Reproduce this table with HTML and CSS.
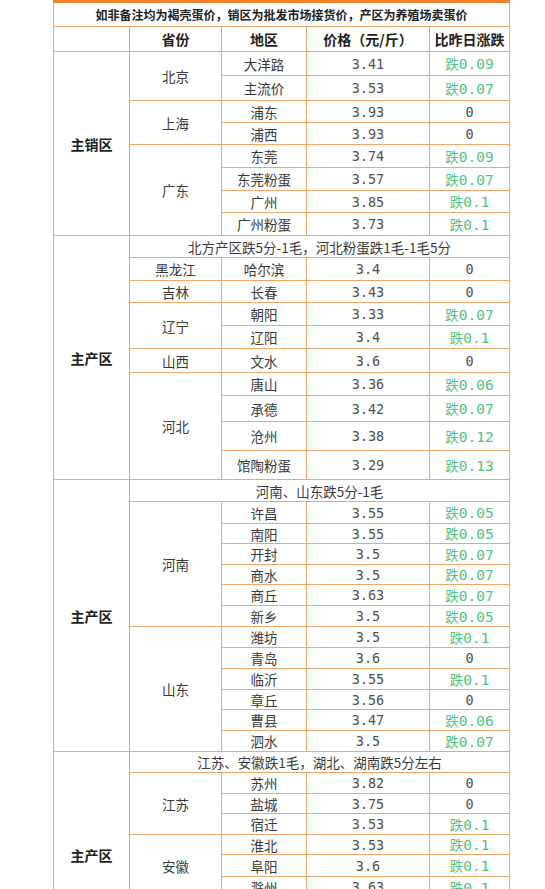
FILE: index.html
```html
<!DOCTYPE html>
<html lang="zh-CN">
<head>
<meta charset="utf-8">
<title>鸡蛋价格</title>
<link rel="stylesheet" href="styles.css">
</head>
<body>
<table class="eggs">
  <colgroup>
    <col class="c1"><col class="c2"><col class="c3"><col class="c4"><col class="c5">
  </colgroup>
  <tr class="h25"><td colspan="5" class="notice">如非备注均为褐壳蛋价，销区为批发市场接货价，产区为养殖场卖蛋价</td></tr>
  <tr class="h25 head"><th></th><th>省份</th><th>地区</th><th>价格（元/斤）</th><th>比昨日涨跌</th></tr>

  <tr class="h24"><td rowspan="8" class="zone">主销区</td><td rowspan="2">北京</td><td>大洋路</td><td class="num">3.41</td><td class="down">跌<span class="num">0.09</span></td></tr>
  <tr class="h25"><td>主流价</td><td class="num">3.53</td><td class="down">跌<span class="num">0.07</span></td></tr>
  <tr class="h22"><td rowspan="2">上海</td><td>浦东</td><td class="num">3.93</td><td class="num">0</td></tr>
  <tr class="h22"><td>浦西</td><td class="num">3.93</td><td class="num">0</td></tr>
  <tr class="h23"><td rowspan="4">广东</td><td>东莞</td><td class="num">3.74</td><td class="down">跌<span class="num">0.09</span></td></tr>
  <tr class="h23"><td>东莞粉蛋</td><td class="num">3.57</td><td class="down">跌<span class="num">0.07</span></td></tr>
  <tr class="h22"><td>广州</td><td class="num">3.85</td><td class="down">跌<span class="num">0.1</span></td></tr>
  <tr class="h23"><td>广州粉蛋</td><td class="num">3.73</td><td class="down">跌<span class="num">0.1</span></td></tr>

  <tr class="h22"><td rowspan="10" class="zone">主产区</td><td colspan="4" class="remark">北方产区跌5分-1毛，河北粉蛋跌1毛-1毛5分</td></tr>
  <tr class="h23"><td>黑龙江</td><td>哈尔滨</td><td class="num">3.4</td><td class="num">0</td></tr>
  <tr class="h22"><td>吉林</td><td>长春</td><td class="num">3.43</td><td class="num">0</td></tr>
  <tr class="h23"><td rowspan="2">辽宁</td><td>朝阳</td><td class="num">3.33</td><td class="down">跌<span class="num">0.07</span></td></tr>
  <tr class="h23"><td>辽阳</td><td class="num">3.4</td><td class="down">跌<span class="num">0.1</span></td></tr>
  <tr class="h24"><td>山西</td><td>文水</td><td class="num">3.6</td><td class="num">0</td></tr>
  <tr class="h23"><td rowspan="4">河北</td><td>唐山</td><td class="num">3.36</td><td class="down">跌<span class="num">0.06</span></td></tr>
  <tr class="h26"><td>承德</td><td class="num">3.42</td><td class="down">跌<span class="num">0.07</span></td></tr>
  <tr class="h29"><td>沧州</td><td class="num">3.38</td><td class="down">跌<span class="num">0.12</span></td></tr>
  <tr class="h29"><td>馆陶粉蛋</td><td class="num">3.29</td><td class="down">跌<span class="num">0.13</span></td></tr>

  <tr class="h22"><td rowspan="13" class="zone">主产区</td><td colspan="4" class="remark">河南、山东跌5分-1毛</td></tr>
  <tr class="h22"><td rowspan="6">河南</td><td>许昌</td><td class="num">3.55</td><td class="down">跌<span class="num">0.05</span></td></tr>
  <tr class="h20"><td>南阳</td><td class="num">3.55</td><td class="down">跌<span class="num">0.05</span></td></tr>
  <tr class="h21"><td>开封</td><td class="num">3.5</td><td class="down">跌<span class="num">0.07</span></td></tr>
  <tr class="h20"><td>商水</td><td class="num">3.5</td><td class="down">跌<span class="num">0.07</span></td></tr>
  <tr class="h21"><td>商丘</td><td class="num">3.63</td><td class="down">跌<span class="num">0.07</span></td></tr>
  <tr class="h21"><td>新乡</td><td class="num">3.5</td><td class="down">跌<span class="num">0.05</span></td></tr>
  <tr class="h21"><td rowspan="6">山东</td><td>潍坊</td><td class="num">3.5</td><td class="down">跌<span class="num">0.1</span></td></tr>
  <tr class="h21"><td>青岛</td><td class="num">3.6</td><td class="num">0</td></tr>
  <tr class="h21"><td>临沂</td><td class="num">3.55</td><td class="down">跌<span class="num">0.1</span></td></tr>
  <tr class="h20"><td>章丘</td><td class="num">3.56</td><td class="num">0</td></tr>
  <tr class="h21"><td>曹县</td><td class="num">3.47</td><td class="down">跌<span class="num">0.06</span></td></tr>
  <tr class="h21"><td>泗水</td><td class="num">3.5</td><td class="down">跌<span class="num">0.07</span></td></tr>

  <tr class="h21"><td rowspan="7" class="zone zone-cont">主产区</td><td colspan="4" class="remark">江苏、安徽跌1毛，湖北、湖南跌5分左右</td></tr>
  <tr class="h21"><td rowspan="3">江苏</td><td>苏州</td><td class="num">3.82</td><td class="num">0</td></tr>
  <tr class="h20"><td>盐城</td><td class="num">3.75</td><td class="num">0</td></tr>
  <tr class="h21"><td>宿迁</td><td class="num">3.53</td><td class="down">跌<span class="num">0.1</span></td></tr>
  <tr class="h20"><td rowspan="3">安徽</td><td>淮北</td><td class="num">3.53</td><td class="down">跌<span class="num">0.1</span></td></tr>
  <tr class="h22"><td>阜阳</td><td class="num">3.6</td><td class="down">跌<span class="num">0.1</span></td></tr>
  <tr class="h21"><td>滁州</td><td class="num">3.63</td><td class="down">跌<span class="num">0.1</span></td></tr>
</table>
</body>
</html>
```

FILE: styles.css
```css
html, body {
  margin: 0;
  padding: 0;
  background: #ffffff;
}

body {
  font-family: "Noto Sans CJK SC", "Noto Sans", sans-serif;
  color: #3a3a3a;
}

.eggs {
  border-collapse: collapse;
  table-layout: fixed;
  width: 456px;
  margin-left: 53px;
  border-top: 3px solid #ef812f;
}

.c1 { width: 76px; }
.c2 { width: 92px; }
.c3 { width: 85px; }
.c4 { width: 123px; }
.c5 { width: 80px; }

.eggs td,
.eggs th {
  border: 1px solid #f4a568;
  padding: 0;
  text-align: center;
  vertical-align: middle;
  font-size: 13.5px;
  line-height: 16px;
  font-weight: 400;
  white-space: nowrap;
  overflow: hidden;
}

.h20 { height: 20px; }
.h21 { height: 21px; }
.h22 { height: 22px; }
.h23 { height: 23px; }
.h24 { height: 24px; }
.h25 { height: 25px; }
.h26 { height: 26px; }
.h29 { height: 29px; }

.eggs .notice {
  font-size: 12px;
  font-weight: 700;
  color: #222222;
}

.eggs .head th {
  font-size: 14px;
  font-weight: 700;
  color: #1e1e1e;
}

.eggs .zone {
  font-size: 14px;
  font-weight: 700;
  color: #1e1e1e;
}

.eggs .zone-cont {
  vertical-align: top;
  padding-top: 95px;
}

.num {
  font-family: "DejaVu Sans Mono", "Liberation Mono", monospace;
  font-size: 14.5px;
  color: #505050;
}

.eggs .down {
  color: #52c283;
}

.eggs .down .num {
  color: #52c283;
}
```
